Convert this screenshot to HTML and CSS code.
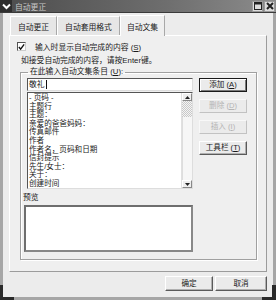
FILE: index.html
```html
<!DOCTYPE html>
<html>
<head>
    <title>自动更正</title>
    <link rel="stylesheet" href="styles.css">
</head>
<body>
    <div class="window">
        <div class="titlebar">
            <span class="menu-btn">
                <svg width="9" height="7" viewBox="0 0 9 7"><path d="M1 1.5 L4.5 5 L8 1.5" fill="none" stroke="#fff" stroke-width="2"/></svg>
            </span>
            <span class="title">自动更正</span>
            <span class="tb-btn">
                <svg width="8" height="8" viewBox="0 0 8 8"><rect x="0.5" y="0.5" width="7" height="7" fill="none" stroke="#222"/><rect x="0.5" y="0.5" width="7" height="2" fill="#222"/></svg>
            </span>
            <span class="tb-btn">
                <svg width="8" height="8" viewBox="0 0 8 8"><path d="M1 1 L7 7 M7 1 L1 7" stroke="#222" stroke-width="2"/></svg>
            </span>
        </div>

        <div class="frame">
            <div class="tabs">
                <div class="tab tab-1">自动更正</div>
                <div class="tab tab-2">自动套用格式</div>
                <div class="tab tab-3 active">自动文集</div>
            </div>

            <div class="panel">
                <div class="check-row">
                    <span class="checkbox">
                        <svg width="8" height="8" viewBox="0 0 8 8"><path d="M1 4 L3 6.5 L7 1" fill="none" stroke="#111" stroke-width="1.6"/></svg>
                    </span>
                    <span>输入时显示自动完成的内容 (<u>S</u>)</span>
                </div>
                <div class="hint">如接受自动完成的内容，请按Enter键。</div>

                <fieldset class="group">
                    <legend>在此输入自动文集条目 (<u>U</u>):</legend>
                    <div class="entry-row">
                        <div class="entry-col">
                            <div class="input">敬礼<span class="caret"></span></div>
                            <div class="list">
                                <div class="items">
                                    <div>- 页码 -</div>
                                    <div>主题行</div>
                                    <div>主题：</div>
                                    <div>亲爱的爸爸妈妈：</div>
                                    <div>传真邮件</div>
                                    <div>作者</div>
                                    <div>作者名，页码和日期</div>
                                    <div>信封提示</div>
                                    <div>先生/女士：</div>
                                    <div>关于：</div>
                                    <div>创建时间</div>
                                </div>
                                <div class="scrollbar">
                                    <div class="arrow">
                                        <svg width="5" height="3" viewBox="0 0 5 3"><path d="M0 3 L2.5 0 L5 3 Z" fill="#222"/></svg>
                                    </div>
                                    <div class="track"></div>
                                    <div class="thumb"></div>
                                    <div class="arrow">
                                        <svg width="5" height="3" viewBox="0 0 5 3"><path d="M0 0 L2.5 3 L5 0 Z" fill="#222"/></svg>
                                    </div>
                                </div>
                            </div>
                        </div>
                        <div class="btn-col">
                            <button class="btn default">添加 (<u>A</u>)</button>
                            <button class="btn" disabled>删除 (<u>D</u>)</button>
                            <button class="btn" disabled>插入 (<u>I</u>)</button>
                            <button class="btn">工具栏 (<u>T</u>)</button>
                        </div>
                    </div>
                    <div class="preview-label">预览</div>
                    <div class="preview"></div>
                </fieldset>
            </div>

            <div class="footer">
                <button class="btn ok">确定</button>
                <button class="btn cancel">取消</button>
            </div>
        </div>
        <div class="grip grip-left"></div>
        <div class="grip grip-right"></div>
    </div>
</body>
</html>
```

FILE: styles.css
```css
* {
    box-sizing: border-box;
}
body {
    margin: 0;
    font-family: "Liberation Sans", "Noto Sans CJK SC", sans-serif;
    font-size: 7.8px;
    color: #1a1a1a;
    background: #ececec;
}
.window {
    position: relative;
    width: 276px;
    height: 300px;
    display: flex;
    flex-direction: column;
    background: #ececec;
}
.titlebar {
    height: 13px;
    display: flex;
    align-items: center;
    background: linear-gradient(to right, #4c4c4c, #6e6e6e 60%, #8c8c8c);
    border-bottom: 1px solid #3a3a3a;
}
.menu-btn {
    width: 12px;
    height: 12px;
    display: flex;
    align-items: center;
    justify-content: center;
    background: #2e2e2e;
}
.title {
    margin-left: 3px;
    color: #c8c8c8;
    flex: 1;
}
.tb-btn {
    width: 11px;
    height: 11px;
    margin-right: 1px;
    display: flex;
    align-items: center;
    justify-content: center;
    background: #dcdcdc;
    border: 1px solid #9a9a9a;
}
.frame {
    flex: 1;
    display: flex;
    flex-direction: column;
    padding: 1px 6px 0 6px;
    border-left: 3px solid #a6a6a6;
    border-right: 3px solid #a6a6a6;
    border-bottom: 3px solid #a6a6a6;
}
.tabs {
    display: flex;
    margin-left: 1px;
    height: 21px;
    align-items: flex-end;
}
.tab {
    height: 19px;
    display: flex;
    align-items: center;
    justify-content: center;
    border: 1px solid #a8a8a8;
    border-bottom: none;
    border-top-color: #fff;
    border-left-color: #fff;
    background: #e6e6e6;
}
.tab-1 { width: 47px; }
.tab-2 { width: 63px; }
.tab-3 { width: 45px; }
.tab.active {
    height: 21px;
    background: #efefef;
    margin-bottom: -1px;
    position: relative;
    z-index: 1;
}
.panel {
    height: 237px;
    border: 1px solid #9c9c9c;
    border-top-color: #fff;
    border-left-color: #fff;
    background: #efefef;
    padding: 6px 0 0 7px;
}
.check-row {
    display: flex;
    align-items: center;
    gap: 9px;
    height: 9px;
}
.checkbox {
    width: 9px;
    height: 9px;
    display: flex;
    align-items: center;
    justify-content: center;
    background: #fff;
    border: 1px solid #555;
    border-right-color: #ccc;
    border-bottom-color: #ccc;
}
.hint {
    margin: 5px 0 0 4px;
    height: 9px;
    line-height: 9px;
}
.group {
    width: 237px;
    height: 192px;
    margin: 3px 0 0 3px;
    padding: 2px 0 0 6px;
    border: 1px solid #a0a0a0;
    box-shadow: inset 1px 1px 0 #fff, 1px 1px 0 #fff;
}
.group legend {
    padding: 0 2px;
    margin-left: 1px;
    line-height: 8px;
}
.entry-row {
    display: flex;
    gap: 6px;
}
.entry-col {
    width: 166px;
}
.input {
    height: 13px;
    line-height: 11px;
    padding-left: 1px;
    background: #fff;
    border: 1px solid #555;
    border-right-color: #ddd;
    border-bottom-color: #ddd;
    display: flex;
    align-items: center;
}
.caret {
    width: 1px;
    height: 9px;
    margin-left: 1px;
    background: #111;
}
.list {
    margin-top: 1px;
    height: 97px;
    display: flex;
    background: #fff;
    border: 1px solid #555;
    border-right-color: #ddd;
    border-bottom-color: #ddd;
}
.items {
    flex: 1;
    padding: 1px 0 0 1px;
    font-size: 7.6px;
    line-height: 8.6px;
    white-space: nowrap;
    overflow: hidden;
}
.scrollbar {
    width: 11px;
    display: flex;
    flex-direction: column;
    border-left: 1px solid #e0e0e0;
}
.arrow {
    height: 8px;
    display: flex;
    align-items: center;
    justify-content: center;
    background: #eee;
    border: 1px solid #fff;
    border-right-color: #888;
    border-bottom-color: #888;
}
.track {
    height: 16px;
    background: repeating-conic-gradient(#c8c8c8 0 25%, #f4f4f4 0 50%) 0 0 / 2px 2px;
}
.thumb {
    flex: 1;
    background: #f6f6f6;
    border-left: 1px solid #ddd;
}
.btn-col {
    display: flex;
    flex-direction: column;
    gap: 7px;
    width: 48px;
}
.btn {
    height: 14px;
    padding: 0;
    font-family: "Liberation Sans", "Noto Sans CJK SC", sans-serif;
    font-size: 7.6px;
    line-height: 10px;
    color: #1a1a1a;
    background: #ebebeb;
    border: 1px solid #fff;
    border-right-color: #5a5a5a;
    border-bottom-color: #5a5a5a;
    box-shadow: inset -1px -1px 0 #b0b0b0;
}
.btn.default {
    border: 1px solid #1a1a1a;
    box-shadow: inset 1px 1px 0 #fff, inset -1px -1px 0 #7a7a7a;
}
.btn:disabled {
    color: #b4b4b4;
    border-color: #f8f8f8 #c2c2c2 #c2c2c2 #f8f8f8;
    box-shadow: none;
}
.preview-label {
    margin: 4px 0 0 -4px;
    height: 10px;
    line-height: 10px;
}
.preview {
    width: 169px;
    height: 47px;
    margin: 2px 0 0 -3px;
    background: #fff;
    border: 2px solid #6e6e6e;
    border-right-color: #888;
    border-bottom-color: #888;
}
.footer {
    display: flex;
    justify-content: flex-end;
    gap: 2px;
    margin-top: 4px;
}
.footer .btn {
    height: 15px;
}
.ok { width: 48px; }
.cancel { width: 52px; }
.grip {
    position: absolute;
    bottom: 0;
    width: 14px;
    height: 15px;
    border-bottom: 3px solid #2a2a2a;
}
.grip-left {
    left: 0;
    border-left: 3px solid #2a2a2a;
}
.grip-right {
    right: 0;
    border-right: 4px solid #2a2a2a;
}
```
